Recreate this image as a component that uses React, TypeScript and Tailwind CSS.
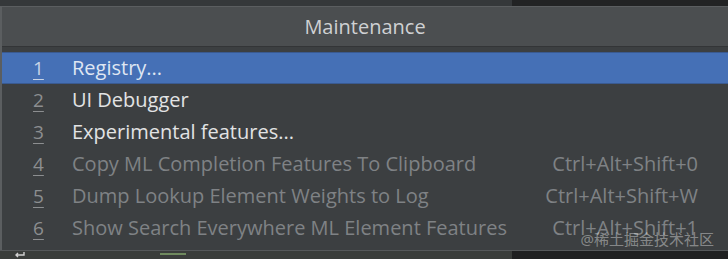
const items = [
    { n: '1', label: 'Registry...', enabled: true, selected: true },
    { n: '2', label: 'UI Debugger', enabled: true },
    { n: '3', label: 'Experimental features...', enabled: true },
    { n: '4', label: 'Copy ML Completion Features To Clipboard', shortcut: 'Ctrl+Alt+Shift+0' },
    { n: '5', label: 'Dump Lookup Element Weights to Log', shortcut: 'Ctrl+Alt+Shift+W' },
    { n: '6', label: 'Show Search Everywhere ML Element Features', shortcut: 'Ctrl+Alt+Shift+1' },
];

export default function App() {
    return (
        <div
            className="relative w-[728px] h-[259px] overflow-hidden bg-[#3c3f41] flex flex-col"
            style={{ fontFamily: '"Open Sans", "Noto Sans CJK SC", sans-serif' }}
        >
            {/* strip of the window behind */}
            <div className="flex h-[6px]">
                <div className="w-[512px] bg-[#35383a]" />
                <div className="flex-1 bg-[#222324]" />
            </div>

            {/* popup */}
            <div className="flex-1 flex flex-col border-t border-l-2 border-[#5b5e60]">
                <div className="h-[40px] bg-[#4b4e50] flex items-center justify-center text-[20px] leading-none text-[#cfd1d3] border-b border-[#333537]">
                    Maintenance
                </div>
                <div className="flex-1 flex flex-col pt-[5px] bg-[#3c3f41]">
                    {items.map((it) => (
                        <div
                            key={it.n}
                            className={
                                it.selected
                                    ? 'h-[32px] flex items-center bg-[#4570b6] border-y border-[#3a5a90] pr-[30px] leading-none'
                                    : 'h-[32px] flex items-center pr-[30px] leading-none'
                            }
                        >
                            <span
                                className={
                                    it.selected
                                        ? 'w-[70px] pl-[31px] text-[19px] underline underline-offset-4 text-[#c9d4e6]'
                                        : 'w-[70px] pl-[31px] text-[19px] underline underline-offset-4 text-[#8c8e90]'
                                }
                            >
                                {it.n}
                            </span>
                            <span
                                className={
                                    it.selected
                                        ? 'flex-1 text-[20px] text-[#dfe6f2]'
                                        : it.enabled
                                          ? 'flex-1 text-[20px] text-[#e2e3e4]'
                                          : 'flex-1 text-[20px] text-[#7f8285]'
                                }
                            >
                                {it.label}
                            </span>
                            {it.shortcut && (
                                <span className="text-[20px] text-[#7f8285]">{it.shortcut}</span>
                            )}
                        </div>
                    ))}
                </div>
            </div>

            {/* bottom strip */}
            <div className="flex h-[9px] border-t border-[#55585a]">
                <div className="w-[512px] bg-[#3a3d3b] flex items-start">
                    <svg className="ml-[14px] mt-[1px]" width="12" height="6" viewBox="0 0 12 6">
                        <path d="M10 0 V3 H2 M4 1 L2 3 L4 5" stroke="#d0d0d0" strokeWidth="1.4" fill="none" />
                    </svg>
                    <div className="ml-[134px] mt-[2px] w-[26px] h-[2px] bg-[#6f8a5e]" />
                </div>
                <div className="flex-1 bg-[#1f2021]" />
            </div>

            {/* watermark */}
            <div className="absolute right-[14px] bottom-[9px] text-[15px] text-white/40">
                @稀土掘金技术社区
            </div>
        </div>
    );
}
